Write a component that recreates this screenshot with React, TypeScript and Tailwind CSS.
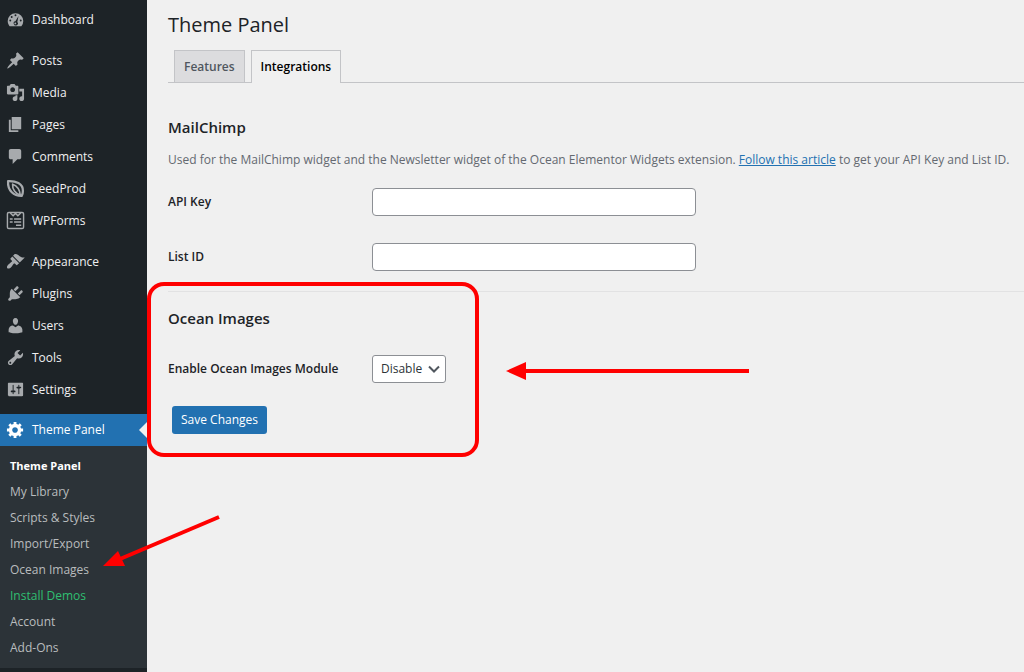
import type { ReactNode } from "react";
import clsx from "clsx";

type MenuItem = { label: string; icon: ReactNode };

const icons: Record<string, ReactNode> = {
  dashboard: (
    <path
      fillRule="evenodd"
      d="M3.8 17h12.4A8.6 8.6 0 0 0 18.2 11.5a8.2 8.2 0 1 0-16.4 0C1.8 13.6 2.6 15.5 3.8 17zM10 4.6a1 1 0 1 1 0 2 1 1 0 0 1 0-2zM6 6.3a1 1 0 1 1 0 2 1 1 0 0 1 0-2zM4.500 10a1 1 0 1 1 0 2 1 1 0 0 1 0-2zM15.5 10a1 1 0 1 1 0 2 1 1 0 0 1 0-2zM13.2 6.4l-1.3 6.200a2.200 2.200 0 1 1-2-.7zM9.8 13.100a1 1 0 1 0 0 2 1 1 0 0 0 0-2z"
    />
  ),
  posts: (
    <path d="M10.44 3.02l1.82-1.82 6.36 6.35-1.83 1.82c-1.05-.68-2.48-.57-3.41.36l-.75.75c-.92.93-1.04 2.35-.35 3.41l-1.83 1.82-2.41-2.41-2.8 2.79c-.42.42-3.38 2.71-3.8 2.29s1.86-3.39 2.28-3.81l2.79-2.79L4.1 9.36l1.83-1.82c1.05.69 2.48.57 3.4-.36l.75-.75c.93-.92 1.05-2.35.36-3.41z" />
  ),
  media: (
    <path d="M13 11V4c0-.55-.45-1-1-1h-1.67L9 1H5L3.67 3H2c-.55 0-1 .45-1 1v7c0 .55.45 1 1 1h10c.55 0 1-.45 1-1zM7 4.5c1.38 0 2.5 1.12 2.5 2.5S8.38 9.5 7 9.5 4.5 8.38 4.5 7 5.62 4.5 7 4.5zM14 6h5v10.5c0 1.38-1.12 2.5-2.5 2.5S14 17.88 14 16.5s1.12-2.5 2.5-2.5c.17 0 .34.02.5.05V9h-3V6zm-4 8.05V13h2v3.5c0 1.38-1.12 2.5-2.5 2.5S7 17.88 7 16.5 8.12 14 9.5 14c.17 0 .34.02.5.05z" />
  ),
  pages: <path d="M6 15V2h10v13H6zm-1 1h8v2H3V5h2v11z" />,
  comments: (
    <path d="M5 2h9c1.1 0 2 .9 2 2v7c0 1.1-.9 2-2 2h-2l-5 5v-5H5c-1.1 0-2-.9-2-2V4c0-1.1.9-2 2-2z" />
  ),
  seedprod: (
    <g fill="none" stroke="currentColor" strokeLinejoin="round">
      <path strokeWidth="2.4" d="M2.2 2.2C10 1.8 18 4.5 17.8 12.5c0 2-.4 3.800-1.300 5.300C8.500 18 1.500 12.500 2.200 2.200z" />
      <path strokeWidth="1.8" d="M7 5.5C11 7 14.500 11 15 17 10 15.500 6.500 11 7 5.500z" />
    </g>
  ),
  wpforms: (
    <g fill="none" stroke="currentColor" strokeWidth="1.5">
      <rect x="1.5" y="1.5" width="17" height="17" rx="1.5" />
      <path d="M4.5 2l3 3L10 2.5 12.5 5l3-3M4 8.5h3M8.5 8.5H16M4 11.5h3M8.5 11.5H16M10.5 15H16" />
    </g>
  ),
  appearance: (
    <path d="M14.48 11.06L7.41 3.99l1.5-1.5c.5-.56 2.3-.47 3.51.32 1.21.8 1.43 1.28 2.91 2.1 1.18.64 2.45 1.26 4.45.85zm-.71.71L6.7 4.7 4.93 6.47c-.39.39-.39 1.02 0 1.41l1.06 1.06c.39.39.39 1.03 0 1.42-.6.6-1.43 1.11-2.21 1.69-.35.26-.7.53-1.01.84C1.43 14.23.4 16.08 1.4 17.07c.99 1 2.84-.03 4.18-1.36.31-.31.58-.66.85-1.02.57-.78 1.08-1.61 1.69-2.21.39-.39 1.02-.39 1.41 0l1.06 1.06c.39.39 1.02.39 1.41 0z" />
  ),
  plugins: (
    <path d="M13.11 4.36L9.87 7.6 8 5.73l3.24-3.24c.35-.34 1.05-.2 1.56.32.52.51.66 1.21.31 1.55zm-8 1.77l.91-1.12 9.01 9.01-1.19.84c-.71.71-2.63 1.16-3.82 1.16H6.14L4.9 17.26c-.59.59-1.54.59-2.12 0-.59-.58-.59-1.53 0-2.12l1.24-1.24v-3.88c0-1.13.4-3.19 1.09-3.89zm7.26 3.97l3.24-3.24c.34-.35 1.04-.21 1.55.31.52.51.66 1.21.31 1.55l-3.24 3.25z" />
  ),
  users: (
    <path d="M10 9.25c-2.27 0-2.73-3.44-2.73-3.44C7 4.02 7.82 2 9.97 2c2.16 0 2.98 2.02 2.71 3.81 0 0-.41 3.44-2.68 3.44zm0 2.57L12.72 10c2.39 0 4.52 2.33 4.52 4.53v2.49s-3.65 1.13-7.24 1.13c-3.65 0-7.24-1.13-7.24-1.13v-2.49c0-2.25 1.94-4.48 4.47-4.48z" />
  ),
  tools: (
    <path d="M16.68 9.77c-1.34 1.34-3.3 1.67-4.95.99l-5.41 6.52c-.99.99-2.59.99-3.58 0s-.99-2.59 0-3.57l6.52-5.42c-.68-1.65-.35-3.61.99-4.95 1.28-1.28 3.12-1.62 4.72-1.06l-2.89 2.89 2.82 2.82 2.86-2.87c.53 1.58.18 3.39-1.08 4.65zM3.81 16.21c.4.39 1.04.39 1.43 0 .4-.4.4-1.04 0-1.43-.39-.4-1.03-.4-1.43 0-.39.39-.39 1.03 0 1.43z" />
  ),
  settings: (
    <path d="M18 16V4c0-.55-.45-1-1-1H3c-.55 0-1 .45-1 1v12c0 .55.45 1 1 1h14c.55 0 1-.45 1-1zM8 11h1c.55 0 1 .45 1 1s-.45 1-1 1H8v1.5c0 .28-.22.5-.5.5s-.5-.22-.5-.5V13H6c-.55 0-1-.45-1-1s.45-1 1-1h1V5.5c0-.28.22-.5.5-.5s.5.22.5.5V11zm5-2h-1c-.55 0-1-.45-1-1s.45-1 1-1h1V5.5c0-.28.22-.5.5-.5s.5.22.5.5V7h1c.55 0 1 .45 1 1s-.45 1-1 1h-1v5.5c0 .28-.22.5-.5.5s-.5-.22-.5-.5V9z" />
  ),
  generic: (
    <path d="M18 12h-2.18c-.17.7-.44 1.35-.81 1.93l1.54 1.54-2.1 2.1-1.54-1.54c-.58.36-1.23.63-1.91.79V19H8v-2.18c-.68-.16-1.33-.43-1.91-.79l-1.54 1.54-2.12-2.12 1.54-1.54c-.36-.58-.63-1.23-.79-1.91H1V9.03h2.17c.16-.7.44-1.35.8-1.94L2.43 5.55l2.1-2.1 1.54 1.54c.58-.37 1.24-.64 1.93-.81V2h3v2.18c.68.16 1.33.43 1.91.79l1.54-1.54 2.12 2.12-1.54 1.54c.36.59.64 1.24.8 1.94H18V12zm-8.5 1.5c1.66 0 3-1.34 3-3s-1.34-3-3-3-3 1.34-3 3 1.34 3 3 3z" />
  ),
};

const menuGroups: MenuItem[][] = [
  [{ label: "Dashboard", icon: icons.dashboard }],
  [
    { label: "Posts", icon: icons.posts },
    { label: "Media", icon: icons.media },
    { label: "Pages", icon: icons.pages },
    { label: "Comments", icon: icons.comments },
    { label: "SeedProd", icon: icons.seedprod },
    { label: "WPForms", icon: icons.wpforms },
  ],
  [
    { label: "Appearance", icon: icons.appearance },
    { label: "Plugins", icon: icons.plugins },
    { label: "Users", icon: icons.users },
    { label: "Tools", icon: icons.tools },
    { label: "Settings", icon: icons.settings },
  ],
];

const submenu = [
  "Theme Panel",
  "My Library",
  "Scripts & Styles",
  "Import/Export",
  "Ocean Images",
  "Install Demos",
  "Account",
  "Add-Ons",
];

function MenuLink({ item, active = false }: { item: MenuItem; active?: boolean }) {
  return (
    <a
      href="#"
      className={clsx(
        "relative flex h-8 items-center gap-[7px] pl-1.5 text-xs",
        active ? "bg-[#2271b1] text-white" : "text-[#f0f0f1]"
      )}
    >
      <svg
        viewBox="0 0 20 20"
        fill="currentColor"
        aria-hidden="true"
        className={clsx("mb-px size-[19px] shrink-0", active ? "text-white" : "text-[#a7aaad]")}
      >
        {item.icon}
      </svg>
      {item.label}
      {active && (
        <span className="absolute top-2 right-0 border-y-8 border-r-8 border-y-transparent border-r-[#f0f0f0]" />
      )}
    </a>
  );
}

function Sidebar() {
  return (
    <aside className="w-[147px] shrink-0 bg-[#1d2327] pt-1">
      <nav>
        <div className="mb-2 flex flex-col gap-[9px]">
          {menuGroups.map((group) => (
            <div key={group[0].label}>
              {group.map((item) => (
                <MenuLink key={item.label} item={item} />
              ))}
            </div>
          ))}
        </div>
        <MenuLink item={{ label: "Theme Panel", icon: icons.generic }} active />
        <ul className="bg-[#2c3338] py-[7px]">
          {submenu.map((label) => (
            <li key={label}>
              <a
                href="#"
                className={clsx(
                  "flex h-[26px] items-center pl-2.5",
                  label === "Theme Panel" ? "text-[11px] font-bold text-white" : "text-xs",
                  label === "Install Demos" && "text-[#2fbf71]",
                  label !== "Theme Panel" && label !== "Install Demos" && "text-[#b9bcbe]"
                )}
              >
                {label}
              </a>
            </li>
          ))}
        </ul>
      </nav>
    </aside>
  );
}

function TextRow({ id, label }: { id: string; label: string }) {
  return (
    <div className="flex items-center">
      <label htmlFor={id} className="w-[204px] text-xs font-semibold">
        {label}
      </label>
      <input
        id={id}
        type="text"
        className="h-7 w-[324px] rounded border border-[#8c8f94] bg-white px-2 text-xs"
      />
    </div>
  );
}

// Red box and arrows pointing out the Ocean Images setting
function Annotations() {
  return (
    <svg
      width="760"
      height="590"
      viewBox="0 0 760 590"
      aria-hidden="true"
      className="pointer-events-none absolute top-0 left-0 text-[#ff0000]"
    >
      <rect x="149" y="284" width="328" height="171" rx="15" fill="none" stroke="currentColor" strokeWidth="4" />
      <path d="M524 371H749" stroke="currentColor" strokeWidth="4" />
      <path d="M506 371L526 362V380Z" fill="currentColor" />
      <path d="M120 559L219 517" stroke="currentColor" strokeWidth="4" />
      <path d="M103 566L118 551L125 566Z" fill="currentColor" />
    </svg>
  );
}

export default function App() {
  return (
    <div className="relative flex min-h-screen bg-[#f0f0f0] font-['Open_Sans','Segoe_UI',sans-serif] text-[#1d2327]">
      <Sidebar />
      <main className="min-w-0 flex-1 pl-[21px]">
        <h1 className="pt-2.5 text-xl leading-[30px]">Theme Panel</h1>

        <div className="mt-2.5 flex items-end gap-1.5 border-b border-[#c3c4c7] pl-1.5 text-xs font-semibold">
          <a
            href="#"
            className="flex h-8 items-center border border-b-0 border-[#c3c4c7] bg-[#dcdcde] px-[9px] text-[#50575e]"
          >
            Features
          </a>
          <a
            href="#"
            className="-mb-px flex h-[33px] items-center border border-b-0 border-[#c3c4c7] bg-[#f0f0f0] px-[9px] text-black"
          >
            Integrations
          </a>
        </div>

        <section className="pt-8">
          <h2 className="text-[15px] leading-6 font-semibold">MailChimp</h2>
          <p className="mt-3 text-xs leading-[18px] text-[#646970]">
            Used for the MailChimp widget and the Newsletter widget of the Ocean Elementor Widgets extension.{" "}
            <a href="#" className="text-[#2271b1] underline">
              Follow this article
            </a>{" "}
            to get your API Key and List ID.
          </p>
          <div className="mt-[19px] flex flex-col gap-[27px]">
            <TextRow id="api-key" label="API Key" />
            <TextRow id="list-id" label="List ID" />
          </div>
        </section>

        <section className="mt-5 border-t border-[#e2e2e3] pt-3.5">
          <h2 className="text-[15px] leading-6 font-semibold">Ocean Images</h2>
          <div className="mt-[25px] flex items-center">
            <label htmlFor="ocean-images" className="w-[204px] text-xs font-semibold">
              Enable Ocean Images Module
            </label>
            <div className="relative">
              <select
                id="ocean-images"
                defaultValue="Disable"
                className="h-7 w-[74px] appearance-none rounded-[3px] border border-[#8c8f94] bg-white pl-2 text-xs text-[#2c3338]"
              >
                <option>Enable</option>
                <option>Disable</option>
              </select>
              <svg
                viewBox="0 0 12 12"
                fill="none"
                stroke="#50575e"
                strokeWidth="2"
                aria-hidden="true"
                className="pointer-events-none absolute top-2 right-1.5 size-3"
              >
                <path d="M1 3.5L6 8.5L11 3.5" />
              </svg>
            </div>
          </div>
          <button
            type="button"
            className="mt-[23px] ml-1 flex h-7 items-center rounded-[3px] bg-[#2271b1] px-[9px] text-xs text-white"
          >
            Save Changes
          </button>
        </section>
      </main>
      <Annotations />
    </div>
  );
}
